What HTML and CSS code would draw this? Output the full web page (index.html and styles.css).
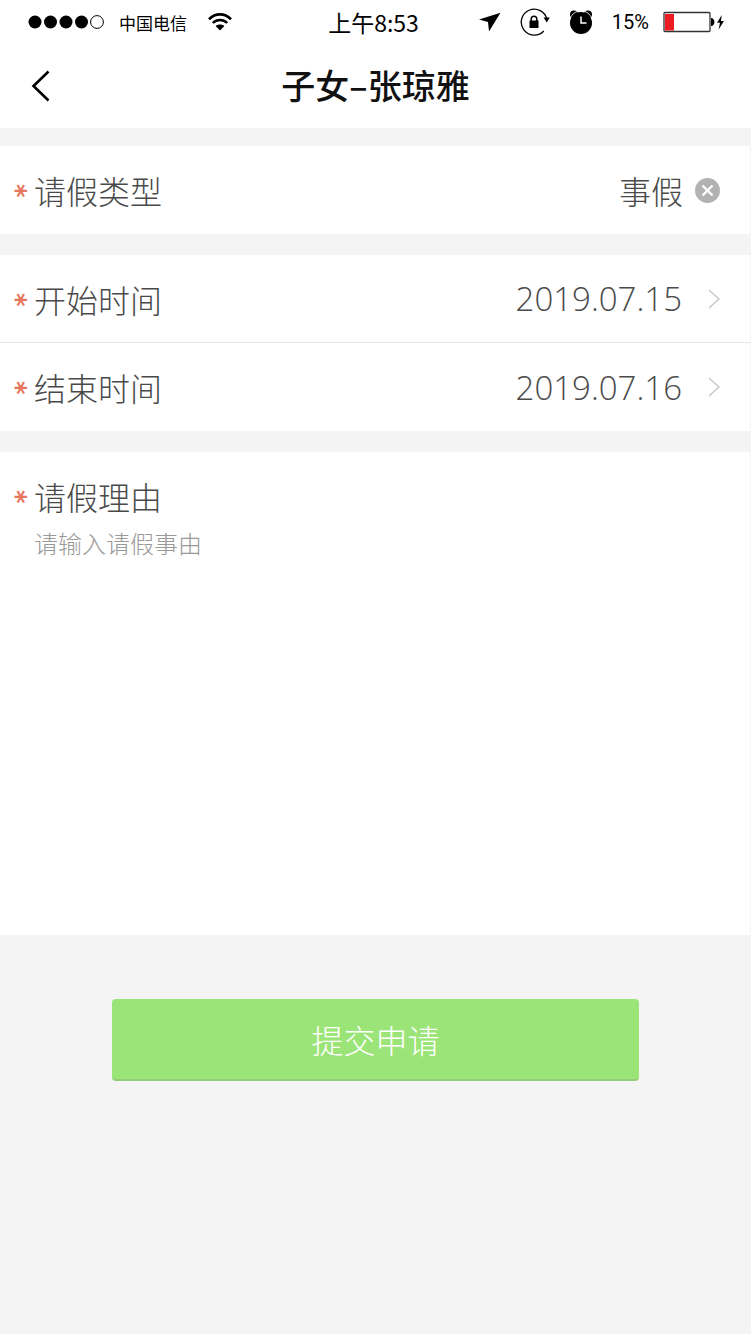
FILE: index.html
```
<!DOCTYPE html>
<html lang="zh-CN">
<head>
    <meta charset="UTF-8">
    <meta name="viewport" content="width=device-width, initial-scale=1.0">
    <title>请假申请</title>
    <link rel="stylesheet" href="styles.css">
</head>
<body>
    <header class="header">
        <div class="status-bar">
            <div class="status-left">
                <svg class="signal" width="77" height="16" viewBox="0 0 77 16">
                    <circle cx="7" cy="8" r="6.5"/>
                    <circle cx="22.5" cy="8" r="6.5"/>
                    <circle cx="38" cy="8" r="6.5"/>
                    <circle cx="53.5" cy="8" r="6.5"/>
                    <circle cx="69" cy="8" r="6.4" fill="none" stroke="#000"/>
                </svg>
                <span class="carrier">中国电信</span>
                <svg class="wifi" width="24" height="18" viewBox="0 0 24 18">
                    <path d="M1 6.2C7.5-.2 16.5-.2 23 6.2" fill="none" stroke="#000" stroke-width="2.8"/>
                    <path d="M4.8 10C9 6 15 6 19.2 10" fill="none" stroke="#000" stroke-width="2.4"/>
                    <path d="M7.6 12.9C10 10.9 14 10.9 16.4 12.9L12 17.5Z"/>
                </svg>
            </div>
            <span class="time">上午8:53</span>
            <div class="status-right">
                <svg width="22" height="20" viewBox="0 0 22 20">
                    <path d="M21.5.8L0 7.5L9 10L10 19.5Z"/>
                </svg>
                <svg width="30" height="28" viewBox="0 0 30 28">
                    <path d="M27 11.5A13 13 0 1 0 23.8 23" fill="none" stroke="#000" stroke-width="1.3"/>
                    <path d="M23.5 9.5H29.8L26.8 14.5Z"/>
                    <rect x="9.5" y="12.5" width="9" height="7.5"/>
                    <path d="M11.2 13V11A2.8 2.8 0 0 1 16.8 11V13" fill="none" stroke="#000" stroke-width="1.5"/>
                </svg>
                <svg width="24" height="24" viewBox="0 0 24 24">
                    <circle cx="12" cy="13" r="11"/>
                    <circle cx="5" cy="4.5" r="4"/>
                    <circle cx="19" cy="4.5" r="4"/>
                    <path d="M8.2 1.5C5 2.5 2.5 5 1.2 8.2M15.8 1.5C19 2.5 21.5 5 22.8 8.2" fill="none" stroke="#fff" stroke-width=".8"/>
                    <path d="M12 6.5V13H17.5" fill="none" stroke="#fff" stroke-width="1.5"/>
                </svg>
                <span class="percent">15%</span>
                <svg class="battery" width="62" height="22" viewBox="0 0 62 22">
                    <rect x="1" y="1.5" width="46" height="19" rx="1" fill="none" stroke="#333" stroke-width="1.3"/>
                    <rect x="2" y="3" width="9" height="16.5" fill="#ed1c24"/>
                    <path d="M48 7C52.5 7 52.5 15 48 15Z"/>
                    <path d="M58.8 4L54 11.7H57L55.6 18.5L61 10H57.9Z"/>
                </svg>
            </div>
        </div>
        <div class="nav-bar">
            <button type="button" class="back" aria-label="返回">
                <svg width="20" height="32" viewBox="0 0 20 32">
                    <path d="M17.5 1.5L2.5 16L17.5 30.5" fill="none" stroke="#000" stroke-width="2.6"/>
                </svg>
            </button>
            <h1 class="title">子女–张琼雅</h1>
        </div>
    </header>

    <form class="leave-form">
        <div class="group">
            <div class="row">
                <span class="required">*</span>
                <span class="label" id="typeLabel">请假类型</span>
                <button type="button" class="value" aria-labelledby="typeLabel typeValue"><span id="typeValue">事假</span></button>
                <button type="button" class="clear" aria-label="清除">
                    <svg width="25" height="25" viewBox="0 0 25 25">
                        <circle cx="12.5" cy="12.5" r="12.5" fill="#b2b2b2"/>
                        <path d="M7.5 7.5L17.5 17.5M17.5 7.5L7.5 17.5" stroke="#fff" stroke-width="2.4"/>
                    </svg>
                </button>
            </div>
        </div>

        <div class="group">
            <div class="row">
                <span class="required">*</span>
                <span class="label" id="startLabel">开始时间</span>
                <button type="button" class="value date" aria-labelledby="startLabel startValue">
                    <span id="startValue">2019.07.15</span>
                    <svg width="12" height="20" viewBox="0 0 12 20">
                        <path d="M1 1L11 10L1 19" fill="none" stroke="#c8c8cc" stroke-width="1.4"/>
                    </svg>
                </button>
            </div>
            <div class="row">
                <span class="required">*</span>
                <span class="label" id="endLabel">结束时间</span>
                <button type="button" class="value date" aria-labelledby="endLabel endValue">
                    <span id="endValue">2019.07.16</span>
                    <svg width="12" height="20" viewBox="0 0 12 20">
                        <path d="M1 1L11 10L1 19" fill="none" stroke="#c8c8cc" stroke-width="1.4"/>
                    </svg>
                </button>
            </div>
        </div>

        <div class="group reason-group">
            <div class="reason-head">
                <span class="required">*</span>
                <label class="label" for="reason">请假理由</label>
            </div>
            <textarea class="reason" id="reason" name="reason" rows="11" placeholder="请输入请假事由"></textarea>
        </div>

        <button type="submit" class="submit">提交申请</button>
    </form>
</body>
</html>
```
FILE: styles.css
```
* {
    box-sizing: border-box;
}

body {
    margin: 0;
    min-height: 100vh;
    background-color: #f4f4f4;
    color: #4a4a4a;
    font-family: "Noto Sans CJK SC", sans-serif;
    font-weight: 300;
}

button {
    padding: 0;
    border: none;
    background: none;
    color: inherit;
    font: inherit;
    cursor: pointer;
}

svg {
    display: block;
    flex: none;
}

.header {
    background: #fff;
    color: #000;
}

/* status bar */
.status-bar {
    display: grid;
    grid-template-columns: 1fr auto 1fr;
    align-items: center;
    height: 44px;
    padding: 0 26px 0 28px;
    font-weight: 400;
}

.status-left, .status-right {
    display: flex;
    align-items: center;
}

.carrier {
    margin: 0 21px 0 14px;
    font-size: 17px;
}

.time {
    margin-right: 6px;
    font-size: 23px;
}

.status-right {
    justify-content: flex-end;
    gap: 19px;
}

.percent {
    font-family: Roboto, sans-serif;
    font-size: 20px;
}

.battery {
    margin-left: -5px;
}

/* title bar */
.nav-bar {
    display: grid;
    grid-template-columns: 60px 1fr 60px;
    align-items: center;
    height: 84px;
}

.back {
    display: flex;
    align-items: center;
    height: 84px;
    padding-left: 31px;
}

.title {
    margin: 0;
    padding-bottom: 4px;
    color: #111;
    font-size: 34px;
    font-weight: 500;
    text-align: center;
}

/* form */
.leave-form {
    display: flex;
    flex-direction: column;
    gap: 21px;
    padding: 18px 1px 40px 0;
}

.group {
    background: #fff;
}

.row {
    display: flex;
    align-items: center;
    height: 88px;
    padding: 0 30px 0 14px;
}

.row:not(:last-child) {
    border-bottom: 1px solid #e5e5e5;
}

/* asterisk turned so that one stroke lies flat */
.required {
    width: 20px;
    padding-top: 12px;
    color: #e8765f;
    font-family: "DejaVu Sans", sans-serif;
    font-size: 26px;
    font-weight: 700;
    line-height: 20px;
    transform: rotate(90deg);
    transform-origin: 7px 17px;
}

.label {
    font-size: 32px;
}

.value {
    flex: 1;
    margin-right: 12px;
    font-size: 32px;
    text-align: right;
}

.date {
    display: flex;
    align-items: center;
    justify-content: flex-end;
    gap: 26px;
    margin-right: 0;
    font-family: "Open Sans", sans-serif;
    font-size: 33px;
}

.reason-group {
    padding: 22px 30px 14px 14px;
}

.reason-head {
    display: flex;
    align-items: center;
    height: 44px;
}

.reason {
    display: block;
    width: 100%;
    padding: 7px 0 0 20px;
    border: none;
    outline: none;
    resize: none;
    color: #4a4a4a;
    font-family: "Noto Sans CJK SC", sans-serif;
    font-size: 24px;
    font-weight: 300;
    line-height: 36px;
}

.reason::placeholder {
    color: #999;
    opacity: 1;
}

.submit {
    height: 82px;
    margin: 43px 111px 0 112px;
    border-bottom: 2px solid #93cd7a;
    border-radius: 4px;
    background: #9be477;
    color: #fff;
    font-size: 32px;
}

.submit:active {
    background: #8fd96b;
}
```
